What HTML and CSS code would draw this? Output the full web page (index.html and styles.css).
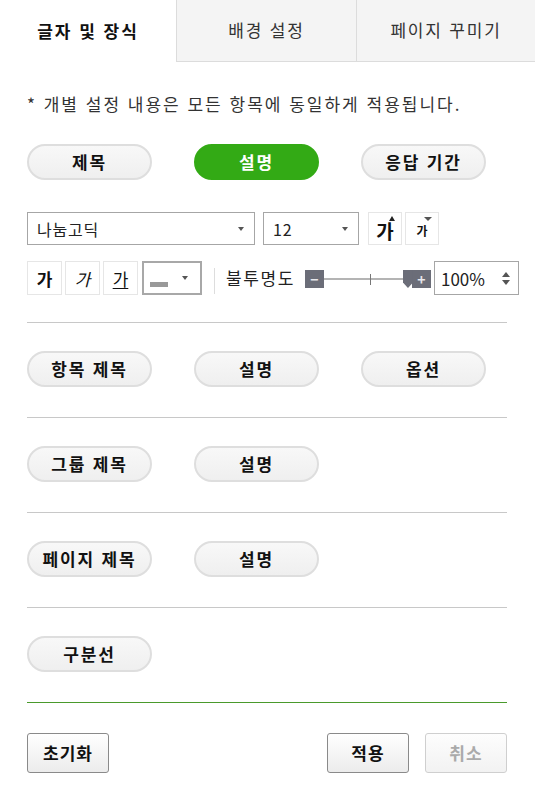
FILE: index.html
```html
<!DOCTYPE html>
<html lang="ko">
<head>
<meta charset="utf-8">
<link rel="stylesheet" href="styles.css">
</head>
<body>
<div class="tabs">
  <div class="tab active">글자 및 장식</div>
  <div class="tab">배경 설정</div>
  <div class="tab">페이지 꾸미기</div>
</div>
<div class="content">
  <p class="note">* 개별 설정 내용은 모든 항목에 동일하게 적용됩니다.</p>
  <div class="pills first">
    <button class="pill">제목</button>
    <button class="pill on">설명</button>
    <button class="pill">응답 기간</button>
  </div>
  <div class="toolbar">
    <div class="tb-row">
      <div class="select font-select"><span>나눔고딕</span><i class="caret"></i></div>
      <div class="select size-select"><span>12</span><i class="caret"></i></div>
      <div class="ibtn big"><span class="up"></span>가</div>
      <div class="ibtn small"><span class="down"></span>가</div>
    </div>
    <div class="tb-row row2">
      <div class="ibtn fmt b">가</div>
      <div class="ibtn fmt it">가</div>
      <div class="ibtn fmt u">가</div>
      <div class="color-select"><span class="swatch"></span><i class="caret"></i></div>
      <span class="vsep"></span>
      <span class="label">불투명도</span>
      <div class="slider">
        <span class="sbtn">&minus;</span>
        <div class="track"><span class="tick"></span><span class="thumb"></span></div>
        <span class="sbtn">+</span>
      </div>
      <div class="percent"><span>100%</span><span class="spin"><i class="sup"></i><i class="sdown"></i></span></div>
    </div>
  </div>
  <div class="section">
    <div class="pills">
      <button class="pill">항목 제목</button>
      <button class="pill">설명</button>
      <button class="pill">옵션</button>
    </div>
  </div>
  <div class="section">
    <div class="pills">
      <button class="pill">그룹 제목</button>
      <button class="pill">설명</button>
    </div>
  </div>
  <div class="section">
    <div class="pills">
      <button class="pill">페이지 제목</button>
      <button class="pill">설명</button>
    </div>
  </div>
  <div class="section">
    <div class="pills">
      <button class="pill">구분선</button>
    </div>
  </div>
  <div class="footer">
    <button class="fbtn">초기화</button>
    <div class="fright">
      <button class="fbtn">적용</button>
      <button class="fbtn disabled">취소</button>
    </div>
  </div>
</div>
</body>
</html>
```

FILE: styles.css
```css
* { box-sizing: border-box; }
html, body { margin: 0; padding: 0; background: #fff; }
body {
  font-family: "Noto Sans CJK KR", "Noto Sans", sans-serif;
  color: #222;
  width: 535px;
}
button { font-family: inherit; }

.tabs { display: flex; height: 62px; }
.tab {
  display: flex; align-items: center; justify-content: center;
  font-size: 17px; color: #333; letter-spacing: 1.8px;
  background: #f4f4f4;
  border-left: 1px solid #dcdcdc;
  border-bottom: 1px solid #dcdcdc;
  padding-bottom: 2px;
}
.tab.active { width: 176px; background: #fff; border: 0; font-weight: bold; color: #111; letter-spacing: 2px; }
.tab:nth-child(2) { width: 180px; }
.tab:nth-child(3) { flex: 1; }

.content { padding-left: 27px; width: 535px; }
.note { margin: 31px 0 0; font-size: 17px; line-height: 22px; color: #333; letter-spacing: 2px; }

.pills { display: flex; gap: 42px; }
.pills.first { margin-top: 29px; }
.pill {
  width: 125px; height: 36px;
  border: 2px solid #dedede;
  border-radius: 18px;
  background: linear-gradient(#f8f8f8, #efefef);
  font-size: 17px; font-weight: bold; color: #111; letter-spacing: 1.8px;
  padding: 0 0 2px;
}
.pill.on { background: #33aa15; border-color: #33aa15; color: #fff; }

.toolbar { margin-top: 32px; width: 500px; }
.tb-row { display: flex; align-items: center; height: 33px; }
.row2 { margin-top: 16px; height: 34px; }

.select {
  height: 33px; border: 1px solid #a6a6a6; background: #fff;
  display: flex; align-items: center; justify-content: space-between;
  padding: 0 10px 0 9px; font-size: 16px; color: #222; letter-spacing: 0.8px;
}
.font-select { width: 228px; }
.size-select { width: 96px; margin-left: 8px; }
.caret {
  width: 0; height: 0;
  border-left: 3.5px solid transparent; border-right: 3.5px solid transparent;
  border-top: 4px solid #555;
}

.ibtn {
  width: 34px; height: 33px; border: 1px solid #e6e6e6; background: #fff;
  display: flex; align-items: center; justify-content: center;
  position: relative; color: #111; font-weight: bold;
}
.ibtn.big { margin-left: 9px; font-size: 19px; padding-top: 3px; }
.ibtn.small { margin-left: 3px; font-size: 12px; padding-top: 4px; }
.ibtn .up {
  position: absolute; left: 20px; top: 3px;
  width: 0; height: 0;
  border-left: 3.5px solid transparent; border-right: 3.5px solid transparent;
  border-bottom: 5px solid #222;
}
.ibtn .down {
  position: absolute; left: 18px; top: 4px;
  width: 0; height: 0;
  border-left: 4px solid transparent; border-right: 4px solid transparent;
  border-top: 4px solid #555;
}
.ibtn.fmt { width: 35px; height: 34px; font-size: 17px; margin-right: 3px; }
.ibtn.it { font-style: italic; font-weight: normal; }
.ibtn.u { font-weight: normal; text-decoration: underline; text-underline-offset: 2px; }

.color-select {
  width: 60px; height: 34px; margin-left: 1px;
  border: 2px solid #a8a8a8; background: #fff;
  display: flex; align-items: flex-end; justify-content: space-between;
  padding: 0 12px 0 6px;
}
.color-select .swatch { width: 18px; height: 5px; background: #999; margin-bottom: 6px; }
.color-select .caret { align-self: center; }

.vsep { width: 1px; height: 26px; background: #ddd; margin: 6px 11px 0 12px; }
.label { font-size: 17px; color: #222; margin-right: 10px; padding-bottom: 2px; letter-spacing: 1.6px; }

.slider { display: flex; align-items: center; padding-top: 2px; }
.sbtn {
  width: 19px; height: 18px; background: #6b6d78; color: #e8e8ec;
  display: flex; align-items: center; justify-content: center;
  font-size: 14px; font-weight: bold; line-height: 1;
}
.track { width: 88px; height: 18px; position: relative; }
.track::before {
  content: ""; position: absolute; left: 0; right: 0; top: 8px; height: 2px; background: #b4b4b4;
}
.tick { position: absolute; left: 46px; top: 4px; width: 1px; height: 11px; background: #777; }
.thumb {
  position: absolute; right: -1px; top: 0; width: 10px; height: 18px;
  background: #6b6d78;
  clip-path: polygon(0 0, 100% 0, 100% 70%, 50% 100%, 0 70%);
}

.percent {
  width: 85px; height: 34px; margin-left: 3px;
  border: 1px solid #a6a6a6; background: #fff;
  display: flex; align-items: center; justify-content: space-between;
  padding: 0 8px 0 6px; font-size: 17px; color: #222;
}
.spin { display: flex; flex-direction: column; gap: 3px; }
.sup, .sdown { width: 0; height: 0; border-left: 4px solid transparent; border-right: 4px solid transparent; }
.sup { border-bottom: 5px solid #555; }
.sdown { border-top: 5px solid #555; }

.section { border-top: 1px solid #c8c8c8; padding: 28px 0 30px; width: 480px; }
.toolbar + .section { margin-top: 27px; }

.footer {
  border-top: 1px solid #4a9a2c; width: 480px;
  display: flex; justify-content: space-between; padding-top: 30px;
}
.fright { display: flex; gap: 16px; }
.fbtn {
  width: 82px; height: 40px;
  border: 1px solid #8a8a8a; border-radius: 3px;
  background: linear-gradient(#ffffff, #ececec);
  font-size: 17px; font-weight: bold; color: #111; letter-spacing: 1px;
  padding: 0 0 2px;
}
.fbtn.disabled { border-color: #cfcfcf; color: #aaa; background: linear-gradient(#fdfdfd, #f2f2f2); }
```
